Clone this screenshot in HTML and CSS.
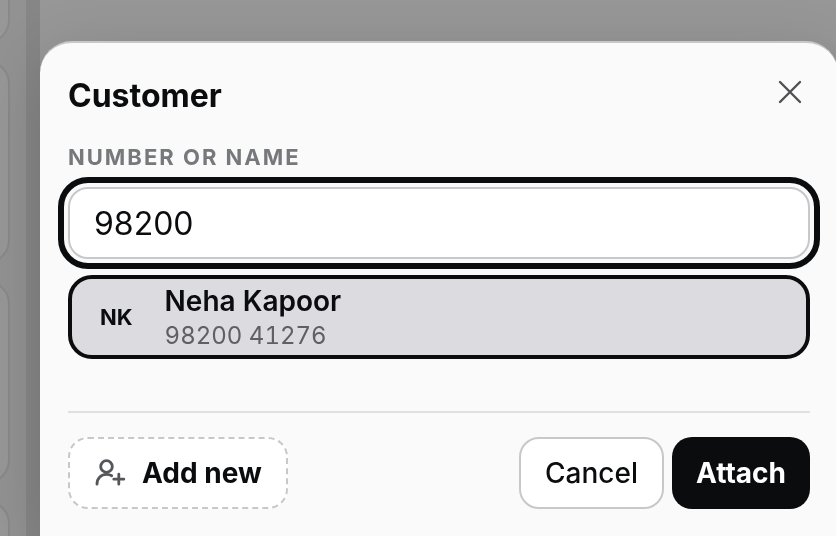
FILE: index.html
```
<!DOCTYPE html>
<html lang="en">
<head>
<meta charset="UTF-8">
<meta name="viewport" content="width=device-width, initial-scale=1.0">
<title>Customer</title>
<link rel="stylesheet" href="styles.css">
</head>
<body>
    <div class="page">
        <div class="tiles">
            <div class="tile"></div>
            <div class="tile"></div>
            <div class="tile"></div>
            <div class="tile"></div>
        </div>
        <div class="gutter"></div>
    </div>

    <form class="sheet" role="dialog" aria-labelledby="sheetTitle">
        <div class="sheet-header">
            <h1 id="sheetTitle">Customer</h1>
            <button type="button" class="close" aria-label="Close">
                <svg width="24" height="24" viewBox="0 0 24 24" fill="none" stroke="currentColor" stroke-width="2.4" stroke-linecap="round">
                    <path d="M2 2l20 20M22 2L2 22"/>
                </svg>
            </button>
        </div>

        <label class="field-label" for="customer">Number or name</label>
        <input class="field" type="text" id="customer" value="98200" autocomplete="off">

        <button type="button" class="result">
            <span class="initials">NK</span>
            <span class="person">
                <span class="name">Neha Kapoor</span>
                <span class="phone">98200 41276</span>
            </span>
        </button>

        <div class="actions">
            <button type="button" class="button button-add">
                <svg width="32" height="28" viewBox="0 0 32 28" fill="none" stroke="currentColor" stroke-width="2.8" stroke-linecap="round">
                    <circle cx="12.500" cy="7.500" r="5.800"/>
                    <path d="M3 25.200c0-6.200 4.200-9.800 9.500-9.800 2 0 3.800.4 5.200 1.300"/>
                    <path d="M24.800 15.200v10M19.800 20.200h10"/>
                </svg>
                Add new
            </button>
            <button type="button" class="button button-cancel">Cancel</button>
            <button type="submit" class="button button-attach">Attach</button>
        </div>
    </form>
</body>
</html>
```
FILE: styles.css
```
* {
    box-sizing: border-box;
}

body, html {
    margin: 0;
    height: 100%;
    overflow: hidden;
}

body {
    font-family: Inter, "Liberation Sans", sans-serif;
    color: #0b0c0e;
    background: #979797;
}

button, input {
    font: inherit;
    color: inherit;
}

/* dimmed page behind the sheet */
.page {
    display: flex;
    height: 100%;
    overflow: hidden;
}

.tiles {
    display: flex;
    flex-direction: column;
    gap: 16px;
    width: 126px;
    margin-left: -100px;
    padding-right: 16px;
    margin-top: -160px;
    background: #929292;
}

.tile {
    flex: none;
    height: 204px;
    border: 2px solid #898989;
    border-radius: 24px;
    background: #979797;
}

.gutter {
    width: 14px;
    background: #868686;
}

/* sheet */
.sheet {
    position: fixed;
    top: 41px;
    right: -2px;
    bottom: 0;
    left: 40px;
    padding: 28px 28px 0;
    border-top: 2px solid #c8c8ca;
    border-radius: 32px 32px 0 0;
    background: #fafafa;
    box-shadow: 0 16px 64px rgba(0, 0, 0, 0.16);
}

.sheet-header {
    display: flex;
    justify-content: space-between;
    align-items: flex-start;
    height: 72px;
}

.sheet-header h1 {
    margin: 5px 0 0;
    font-size: 32px;
    line-height: 40px;
    font-weight: 700;
}

.close {
    display: flex;
    padding: 9px 8px;
    border: 0;
    background: none;
    color: #4f5053;
}

.field-label {
    display: block;
    margin-bottom: 16px;
    font-size: 22px;
    line-height: 28px;
    font-weight: 700;
    letter-spacing: 2px;
    text-transform: uppercase;
    color: #77787b;
}

.field {
    display: block;
    width: 100%;
    height: 72px;
    padding: 0 24px;
    border: 2px solid #c8c8ca;
    border-radius: 20px;
    background: #fff;
    font-size: 32px;
    outline: 6px solid #0b0c0e;
    outline-offset: 4px;
}

.result {
    display: flex;
    align-items: center;
    width: 100%;
    height: 84px;
    margin-top: 16px;
    padding: 0 28px;
    gap: 32px;
    border: 4px solid #0b0c0e;
    border-radius: 24px;
    background: #dcdbdf;
    text-align: left;
}

.initials {
    font-size: 22px;
    font-weight: 700;
}

.person {
    display: flex;
    flex-direction: column;
    padding-top: 2px;
}

.name {
    font-size: 28px;
    line-height: 36px;
    font-weight: 600;
}

.phone {
    font-size: 24px;
    line-height: 34px;
    font-variant-numeric: tabular-nums;
    color: #5f6064;
}

.actions {
    display: flex;
    gap: 8px;
    margin-top: 52px;
    padding-top: 24px;
    border-top: 2px solid #e0e0e2;
}

.button {
    display: flex;
    align-items: center;
    gap: 16px;
    height: 72px;
    padding: 0 24px;
    border: 2px solid #c8c8ca;
    border-radius: 20px;
    background: #fff;
    font-size: 28px;
    font-weight: 500;
}

.button-add {
    margin-right: auto;
    border-style: dashed;
    font-weight: 700;
}

.button-add svg {
    color: #55565a;
}

.button-attach {
    border: 0;
    background: #0b0c0e;
    color: #fff;
    font-weight: 700;
}
```
